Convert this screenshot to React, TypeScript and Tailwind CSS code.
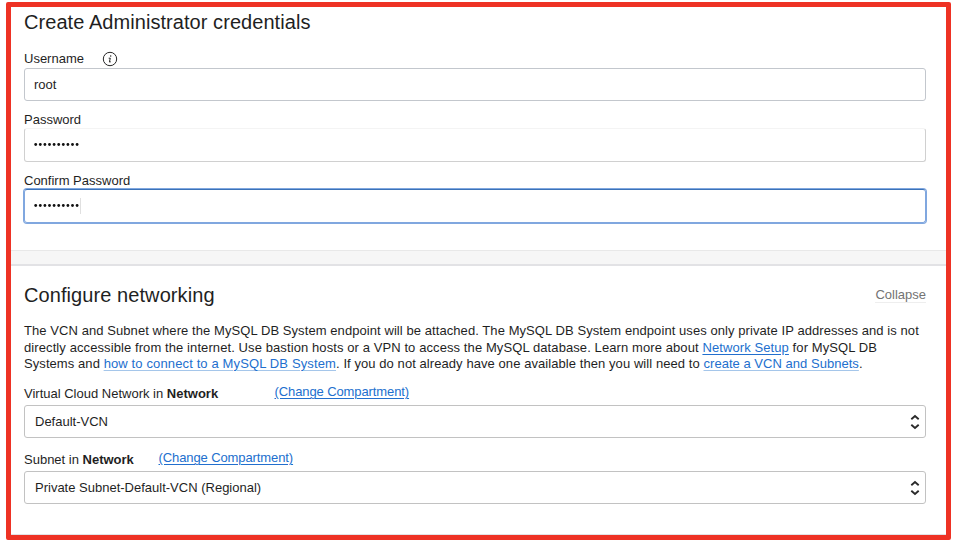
import React from "react";

function Chevrons() {
  return (
    <svg width="10" height="18" viewBox="0 0 10 18" fill="none" stroke="#2b2b2b" strokeWidth="1.9">
      <path d="M1.3 6.2 5 3l3.7 3.2M1.3 11.8 5 15l3.7-3.2" />
    </svg>
  );
}

function InfoIcon() {
  return (
    <svg width="16" height="16" viewBox="0 0 16 16" fill="none" stroke="#262626">
      <circle cx="8" cy="8" r="6.7" strokeWidth="1" />
      <circle cx="8.7" cy="4.9" r="0.75" fill="#262626" stroke="none" />
      <path d="M6.7 7.2h1.6L7.4 10.9q0 .6 1.4-.2" strokeWidth="1" />
    </svg>
  );
}

function Dots() {
  return (
    <svg width="46" height="4" viewBox="0 0 46 4" fill="#111">
      {Array.from({ length: 10 }, (_, i) => (
        <circle key={i} cx={1.7 + i * 4.6} cy="1.5" r="1.4" />
      ))}
    </svg>
  );
}

function Link({ children, className = "" }: { children: React.ReactNode; className?: string }) {
  return (
    <a className={"text-[#226fce] underline decoration-1 underline-offset-2 " + className}>{children}</a>
  );
}

function Select({ children }: { children: React.ReactNode }) {
  return (
    <div className="flex h-[33px] w-[902px] items-center justify-between rounded-[3px] border border-[#c2c2c2] bg-white pr-[5px] pl-[10px]">
      {children}
      <Chevrons />
    </div>
  );
}

export default function App() {
  return (
    <div className="h-[546px] w-[956px] overflow-hidden bg-white pt-[2px] pl-[5.5px] font-['Liberation_Sans',Arial,sans-serif] text-[13px] leading-[16px] whitespace-nowrap text-[#1f1f1f]">
      <div className="flex h-[537.5px] w-[945.5px] flex-col rounded-[2px] border-[5px] border-[#ee3224] bg-white">
        <section className="h-[243px] pt-[3px] pl-[13.5px]">
          <h1 className="h-[24px] text-[20px] leading-[24px] tracking-[0.06px]">Create Administrator credentials</h1>
          <div className="mt-[17px] flex h-[16px] items-center">
            <label className="w-[78px]">Username</label>
            <InfoIcon />
          </div>
          <div className="mt-px flex h-[33px] w-[902px] items-center rounded-[3px] border border-[#c3c7cd] pl-[9px]">root</div>
          <label className="mt-[11px] block h-[16px]">Password</label>
          <div className="flex h-[34px] w-[902px] items-center rounded-[3px] border border-[#d0d0d0] border-t-[#f4f4f4] pl-[9px]">
            <Dots />
          </div>
          <label className="mt-[11px] block h-[16px]">Confirm Password</label>
          <div className="flex h-[34px] w-[902px] items-center rounded-[3px] border border-[#80a7df] border-t-[#3c72b8] pl-[9px] ring-1 ring-[#80a7df]">
            <Dots />
            <span className="h-[16px] w-px bg-[#e0e0e0]" />
          </div>
        </section>
        <div className="h-[16px] border-t border-b-2 border-t-[#e8e8e8] border-b-[#e2e2e5] bg-[#f6f6f6]" />
        <section className="flex-1 border-b border-[#e2e2e5] pt-[17px] pl-[13.5px]">
          <div className="flex h-[24px] w-[902px] items-center justify-between">
            <h2 className="text-[20px] leading-[24px] tracking-[0.08px]">Configure networking</h2>
            <span className="border-b border-[#eeeeee] leading-[14px] text-[#737373]">Collapse</span>
          </div>
          <div className="mt-[16px] h-[50px] leading-[16.5px]">
            <div className="tracking-[0.073px]">The VCN and Subnet where the MySQL DB System endpoint will be attached. The MySQL DB System endpoint uses only private IP addresses and is not</div>
            <div className="tracking-[0.093px]">
              directly accessible from the internet. Use bastion hosts or a VPN to access the MySQL database. Learn more about <Link>Network Setup</Link> for MySQL DB
            </div>
            <div className="tracking-[0.072px]">
              Systems and <Link className="tracking-[0.13px] decoration-[#a5c6ea]">how to connect to a MySQL DB System</Link>. If you do not already have one available then you will need to <Link className="tracking-[0.03px] decoration-[#a5c6ea]">create a VCN and Subnets</Link>.
            </div>
          </div>
          <div className="mt-[11px] flex h-[21px] items-start">
            <label className="w-[250.5px] pt-[2px]">
              Virtual Cloud Network in <b>Network</b>
            </label>
            <Link className="tracking-[-0.1px] underline-offset-1">(Change Compartment)</Link>
          </div>
          <Select>Default-VCN</Select>
          <div className="mt-[12px] flex h-[21px] items-start">
            <label className="w-[134.5px] pt-[2px]">
              Subnet in <b>Network</b>
            </label>
            <Link className="tracking-[-0.1px] underline-offset-1">(Change Compartment)</Link>
          </div>
          <Select>Private Subnet-Default-VCN (Regional)</Select>
        </section>
      </div>
    </div>
  );
}
